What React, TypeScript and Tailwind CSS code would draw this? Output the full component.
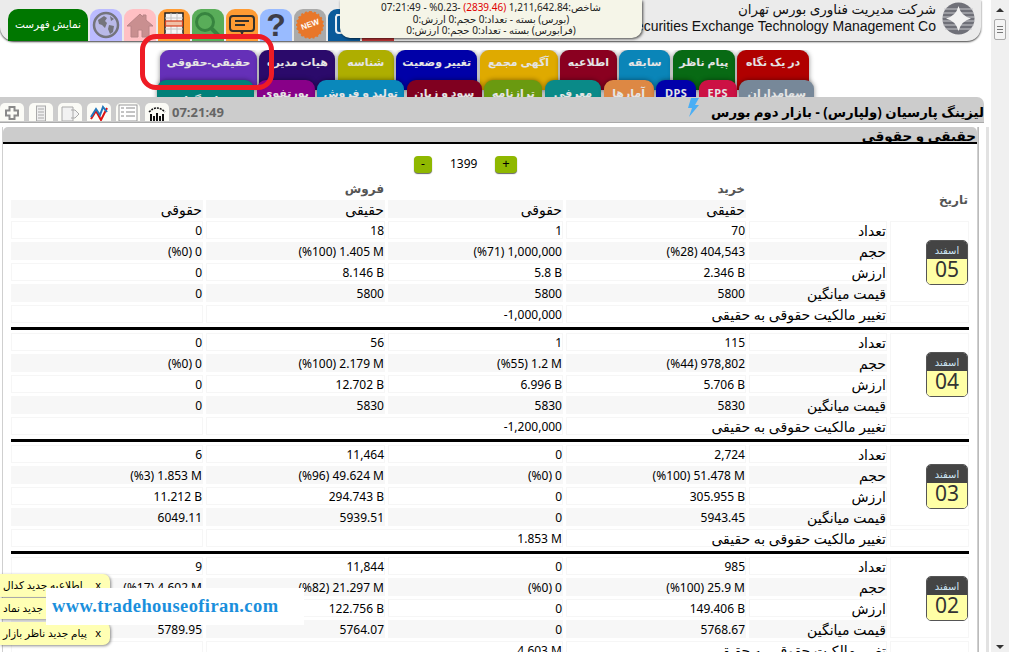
import { FC, ReactNode } from "react";

interface TabItem {
  label: string;
  width: string;
  color: string;
  pad?: string;
}

const topTabs: TabItem[] = [
  { label: "حقیقی-حقوقی", width: "w-[97px]", color: "bg-[#6530b8]" },
  { label: "هیات مدیره", width: "w-[76px]", color: "bg-[#2b0a6b]" },
  { label: "شناسه", width: "w-[56px]", color: "bg-[#aeae00]" },
  { label: "تغییر وضعیت", width: "w-[81px]", color: "bg-[#0000a8]" },
  { label: "آگهی مجمع", width: "w-[78px]", color: "bg-[#dfaa00]" },
  { label: "اطلاعیه", width: "w-[57px]", color: "bg-[#8a0020]" },
  { label: "سابقه", width: "w-[51px]", color: "bg-[#0a85b8]" },
  { label: "پیام ناظر", width: "w-[62px]", color: "bg-[#086a14]" },
  { label: "در یک نگاه", width: "w-[72px]", color: "bg-[#b00000]" },
];

const bottomTabs: TabItem[] = [
  { label: "سرمایه گذاری", width: "w-[97px]", color: "bg-[#008078]", pad: "pt-[12px]" },
  { label: "پورتفوی", width: "w-[58px]", color: "bg-[#880088]", pad: "pt-[5px]" },
  { label: "تولید و فروش", width: "w-[87px]", color: "bg-[#0a88bb]", pad: "pt-[5px]" },
  { label: "سود و زیان", width: "w-[75px]", color: "bg-[#800020]", pad: "pt-[5px]" },
  { label: "ترازنامه", width: "w-[58px]", color: "bg-[#6a9a10]", pad: "pt-[5px]" },
  { label: "معرفی", width: "w-[56px]", color: "bg-[#0a8a88]", pad: "pt-[5px]" },
  { label: "آمارها", width: "w-[50px]", color: "bg-[#dd8844]", pad: "pt-[5px]" },
  { label: "DPS", width: "w-[40px]", color: "bg-[#0000aa]", pad: "pt-[5px]" },
  { label: "EPS", width: "w-[38px]", color: "bg-[#cc1144]", pad: "pt-[5px]" },
  { label: "سهامداران", width: "w-[75px]", color: "bg-[#778899]", pad: "pt-[5px]" },
];

interface DayRow {
  month: string;
  day: string;
  count: string[];
  volume: string[];
  value: string[];
  average: string[];
  change: string;
}

const days: DayRow[] = [
  {
    month: "اسفند",
    day: "05",
    count: ["0", "18", "1", "70"],
    volume: ["(%0) 0", "(%100) 1.405 M", "(%71) 1,000,000", "(%28) 404,543"],
    value: ["0", "8.146 B", "5.8 B", "2.346 B"],
    average: ["0", "5800", "5800", "5800"],
    change: "-1,000,000",
  },
  {
    month: "اسفند",
    day: "04",
    count: ["0", "56", "1", "115"],
    volume: ["(%0) 0", "(%100) 2.179 M", "(%55) 1.2 M", "(%44) 978,802"],
    value: ["0", "12.702 B", "6.996 B", "5.706 B"],
    average: ["0", "5830", "5830", "5830"],
    change: "-1,200,000",
  },
  {
    month: "اسفند",
    day: "03",
    count: ["6", "11,464", "0", "2,724"],
    volume: ["(%3) 1.853 M", "(%96) 49.624 M", "(%0) 0", "(%100) 51.478 M"],
    value: ["11.212 B", "294.743 B", "0", "305.955 B"],
    average: ["6049.11", "5939.51", "0", "5943.45"],
    change: "1.853 M",
  },
  {
    month: "اسفند",
    day: "02",
    count: ["9", "11,844", "0", "985"],
    volume: ["(%17) 4.602 M", "(%82) 21.297 M", "(%0) 0", "(%100) 25.9 M"],
    value: ["0", "122.756 B", "0", "149.406 B"],
    average: ["5789.95", "5764.07", "0", "5768.67"],
    change: "4.603 M",
  },
];

const gridCols =
  "grid grid-cols-[192px_179px_175px_180px_138px_79px] gap-x-[3px]";

const Tab: FC<{ tab: TabItem }> = ({ tab }) => (
  <div
    className={`${tab.width} ${tab.color} ${tab.pad ?? "pt-[4px]"} h-[40px] shrink-0 rounded-t-[9px] text-center text-[11px] leading-[16px] font-bold tracking-[0.5px] whitespace-nowrap text-[#e4e4e4] shadow-[0_0_5px_rgba(0,0,0,0.45)]`}
  >
    {tab.label}
  </div>
);

const IconBox: FC<{ color: string; children: ReactNode }> = ({
  color,
  children,
}) => (
  <div
    className={`${color} flex h-[32px] w-[32px] shrink-0 items-center justify-center overflow-hidden rounded-t-[9px]`}
  >
    {children}
  </div>
);

const ToolButton: FC<{ children: ReactNode }> = ({ children }) => (
  <div className="flex h-[18px] w-[24px] shrink-0 items-start justify-center overflow-hidden rounded-t-[5px] bg-[#fbfbf6]">
    {children}
  </div>
);

// ar: persian text needs a bigger size than the digits to get the same look
const Cell: FC<{
  shade?: boolean;
  ar?: boolean;
  className?: string;
  children?: ReactNode;
}> = ({ shade, ar, className, children }) => (
  <div
    dir="ltr"
    className={`${shade ? "bg-[#f7f7f7]" : "shadow-[inset_0_0_0_1px_#f6f6f6]"} ${ar ? "text-[14px] leading-[19px]" : "text-[12px] leading-[20px]"} ${className ?? ""} h-[18px] pr-px text-right font-normal whitespace-nowrap text-black`}
  >
    {children}
  </div>
);

const DayBlock: FC<{ row: DayRow }> = ({ row }) => (
  <div>
    <div className={`${gridCols} gap-y-[3px]`}>
      {row.count.map((v, i) => (
        <Cell key={i}>{v}</Cell>
      ))}
      <Cell ar>تعداد</Cell>
      <div className="row-span-4 flex items-center justify-end pr-px shadow-[inset_0_0_0_1px_#f6f6f6]">
        <div className="mt-[1px] w-[42px] overflow-hidden rounded-[5px] border border-[#555] text-center">
          <div className="h-[18px] bg-[#444] text-[10px] leading-[18px] text-[#cfe6f5]">
            {row.month}
          </div>
          <div className="h-[25px] bg-[#ffffa6] text-[21px] leading-[20px] text-[#333]">
            {row.day}
          </div>
        </div>
      </div>
      {row.volume.map((v, i) => (
        <Cell key={i} shade>
          {v}
        </Cell>
      ))}
      <Cell shade ar>
        حجم
      </Cell>
      {row.value.map((v, i) => (
        <Cell key={i}>{v}</Cell>
      ))}
      <Cell ar>ارزش</Cell>
      {row.average.map((v, i) => (
        <Cell key={i} shade>
          {v}
        </Cell>
      ))}
      <Cell shade ar>
        قیمت میانگین
      </Cell>
      <Cell />
      <Cell className="col-span-2">{row.change}</Cell>
      <Cell ar className="col-span-2">
        تغییر مالکیت حقوقی به حقیقی
      </Cell>
      <Cell />
    </div>
    <div className="mt-[4px] mb-[3px] h-[3px] w-[958px] bg-black" />
  </div>
);

const Toast: FC<{ text: string; className: string }> = ({ text, className }) => (
  <div
    className={`${className} absolute left-0 flex w-[110px] items-center justify-between overflow-hidden rounded-r-[7px] bg-[#ffffb4] pr-[9px] text-[10.5px] whitespace-nowrap text-black shadow-[1px_1px_3px_rgba(0,0,0,0.45)]`}
  >
    <span dir="rtl" className="pl-[3px]">
      {text}
    </span>
    <span className="text-[11px]">x</span>
  </div>
);

const App: FC = () => {
  return (
    <div className="relative flex h-[652px] w-[1009px] overflow-hidden bg-white font-['Noto_Sans','DejaVu_Sans',sans-serif]">
      <div className="w-[991px] shrink-0">
        {/* header */}
        <div className="flex h-[41px] w-[981px] items-end rounded-b-[14px] bg-[#ebebeb] pl-[8px] shadow-[0_1px_2px_rgba(0,0,0,0.75)]">
          <div className="mr-[2px] flex h-[32px] w-[80px] shrink-0 items-center justify-center rounded-t-[10px] bg-[#007700] text-[10.5px] text-white">
            نمایش فهرست
          </div>
          <div className="flex gap-[2px]">
            <IconBox color="bg-[#bbbbff]">
              <svg width="28" height="28" viewBox="0 0 28 28">
                <circle cx="14" cy="14" r="12" fill="#b9b9e8" stroke="#74747c" strokeWidth="2.5" />
                <path d="M6 9l6-4 3 2-2 3 2 2-2 5-3-3-3-1zM17 14l5 1-1 6-3 2-2-5zM18 5l4 3-3 2z" fill="#74747c" />
              </svg>
            </IconBox>
            <IconBox color="bg-[#ffc0c4]">
              <svg width="30" height="28" viewBox="0 0 30 28">
                <path d="M15 3L2 15h4v11h7v-7h4v7h7V15h4L21 9V4h-3v2z" fill="#c98f90" stroke="#b88486" />
              </svg>
            </IconBox>
            <IconBox color="bg-[#ff9b33]">
              <svg width="20" height="28" viewBox="0 0 20 28">
                <rect x="1" y="2" width="18" height="26" fill="#f7f5f4" stroke="#222" strokeWidth="1.5" />
                <path d="M1 7h18M1 18h18M1 23h18M7 2v26M13 2v26" stroke="#c4c4c4" />
                <rect x="1.5" y="10" width="17" height="5" fill="#f0c0a8" stroke="#d8401f" strokeWidth="1.2" />
              </svg>
            </IconBox>
            <IconBox color="bg-[#59ad59]">
              <svg width="30" height="30" viewBox="0 0 30 30">
                <circle cx="12" cy="12" r="8.5" fill="none" stroke="#37843f" strokeWidth="3" />
                <path d="M18 18l9 9" stroke="#37843f" strokeWidth="4" />
              </svg>
            </IconBox>
            <IconBox color="bg-[#ff9b33]">
              <svg width="28" height="28" viewBox="0 0 28 28">
                <rect x="2" y="5" width="24" height="15" rx="3" fill="none" stroke="#33302c" strokeWidth="2" />
                <path d="M7 10h14M7 14h10" stroke="#33302c" strokeWidth="2" />
                <path d="M12 20l2 5 2-5z" fill="#33302c" />
              </svg>
            </IconBox>
            <IconBox color="bg-[#99bbff]">
              <span className="font-['Liberation_Sans',sans-serif] text-[32px] leading-[32px] font-bold text-[#3d3d48]">
                ?
              </span>
            </IconBox>
            <IconBox color="bg-[#aaaaaa]">
              <div className="relative flex h-[26px] w-[26px] items-center justify-center rounded-full bg-[#e8772a] outline-2 outline-offset-[-1px] outline-dotted outline-[#e8772a]">
                <span className="rotate-[-20deg] font-['Liberation_Sans',sans-serif] text-[8px] font-bold text-white">
                  NEW
                </span>
              </div>
            </IconBox>
            <IconBox color="bg-[#0a5a9a]">
              <svg width="28" height="28" viewBox="0 0 28 28">
                <path d="M7 4h12v18H9a3 3 0 0 1-3-3V6z" fill="none" stroke="#e8eef4" strokeWidth="2" />
              </svg>
            </IconBox>
            <IconBox color="bg-[#c23636]">
              <span />
            </IconBox>
          </div>
          <div className="mb-[6px] ml-auto flex flex-col items-end text-[#111]">
            <span dir="rtl" className="text-[13.5px] leading-[17px]">
              شرکت مدیریت فناوری بورس تهران
            </span>
            <span className="font-['Liberation_Sans',sans-serif] text-[14px] leading-[17px] whitespace-nowrap">
              Securities Exchange Technology Management Co
            </span>
          </div>
          <svg className="mr-[6px] mb-[6px] ml-[6px] shrink-0" width="33" height="33" viewBox="0 0 33 33">
            <circle cx="16.5" cy="16.5" r="16" fill="#6f7078" />
            <path d="M2 7h29M1 11h31M0 15h33M0 19h33M1 23h31M3 27h27" stroke="#c8c8cc" strokeWidth="1" />
            <path d="M16.5 4Q19 14 29 16.5Q19 19 16.5 29Q14 19 4 16.5Q14 14 16.5 4z" fill="#f2f2f2" />
          </svg>
        </div>

        {/* tabs */}
        <div className="mt-[9px] h-[47px] overflow-hidden">
          <div className="flex h-[30px] gap-[2.4px] pl-[160px]">
            {topTabs.map((t) => (
              <Tab key={t.label} tab={t} />
            ))}
          </div>
          <div className="relative flex h-[17px] gap-[2.6px] pl-[157px]">
            {bottomTabs.map((t) => (
              <Tab key={t.label} tab={t} />
            ))}
          </div>
        </div>

        {/* toolbar */}
        <div className="flex h-[26px] w-[984px] items-end rounded-tr-[7px] border-b border-[#aaa] bg-[#cccccc] pb-px">
          <div className="flex gap-[5px]">
            <ToolButton>
              <svg width="16" height="18" viewBox="0 0 16 18">
                <path d="M5.5 4h5v3.5H14v5h-3.500V16h-5v-3.500H2v-5h3.500z" fill="none" stroke="#8a8a8a" strokeWidth="2" />
              </svg>
            </ToolButton>
            <ToolButton>
              <svg width="12" height="18" viewBox="0 0 12 18">
                <rect x="1.500" y="3" width="9" height="15" fill="#eee" stroke="#aaa" />
                <path d="M3 6h6M3 9h6M3 12h6M3 15h6" stroke="#aaa" />
              </svg>
            </ToolButton>
            <ToolButton>
              <svg width="20" height="18" viewBox="0 0 20 18">
                <path d="M2 4h11v14H2zM11 7h4l4 4-4 4h-4" fill="#f2f2f2" stroke="#aaa" />
              </svg>
            </ToolButton>
            <ToolButton>
              <svg width="18" height="18" viewBox="0 0 18 18">
                <path d="M1 16L6 8l5 9 6-12" fill="none" stroke="#dd1111" strokeWidth="2" />
                <path d="M1 14L6 6l4 6 3-8 4 5" fill="none" stroke="#2277bb" strokeWidth="2" />
              </svg>
            </ToolButton>
            <ToolButton>
              <svg width="20" height="18" viewBox="0 0 20 18">
                <rect x="1" y="2" width="18" height="16" fill="#fff" stroke="#999" />
                <path d="M3 5h3M8 5h9M3 9h3M8 9h9M3 13h3M8 13h9" stroke="#888" />
              </svg>
            </ToolButton>
            <ToolButton>
              <svg width="20" height="18" viewBox="0 0 20 18">
                <path d="M2 9Q10 1 18 9" fill="none" stroke="#111" strokeWidth="1.500" strokeDasharray="2 1" />
                <path d="M4 18v-7M7 18v-5M10 18v-8M13 18v-5M16 18v-7" stroke="#111" strokeWidth="2" />
              </svg>
            </ToolButton>
          </div>
          <span className="ml-[3px] text-[13px] leading-[18px] font-bold text-[#666]">
            07:21:49
          </span>
          <svg className="mb-[4px] ml-auto shrink-0" width="12" height="19" viewBox="0 0 12 19">
            <path d="M4 0h8L8 7h4L2 19l3-9H1z" fill="#4aaef5" />
          </svg>
          <span dir="rtl" className="ml-[12px] text-[13.3px] leading-[18px] font-bold whitespace-nowrap text-black">
            لیزینگ پارسیان (ولپارس) - بازار دوم بورس
          </span>
        </div>

        {/* panel */}
        <div className="mt-[4px] ml-[2px] w-[976px] border-x border-[#cfcfcf] shadow-[1px_0_0_#bbb]">
          <div className="flex h-[17px] items-start justify-end rounded-t-[5px] border-b-2 border-black bg-[#cccccc] pr-[1px] text-[13.5px] leading-[19px] font-bold text-black">
            <span dir="rtl">حقیقی و حقوقی</span>
          </div>
          <div className="mt-[11px] flex h-[18px] items-center pl-[411px]">
            <div className="h-[17px] w-[18px] rounded-[4px] bg-[#8fb800] text-center text-[12px] leading-[15px] shadow-[0_1px_1px_#666]">
              -
            </div>
            <span className="mx-[18px] w-[27px] text-[12px]">1399</span>
            <div className="h-[17px] w-[22px] rounded-[4px] bg-[#8fb800] text-center text-[13px] leading-[15px] shadow-[0_1px_1px_#666]">
              +
            </div>
          </div>
          <div className="pl-[8px]">
            <div className={`${gridCols} mt-[8px] mb-[3px] gap-y-[4px] text-right text-[12px] font-bold text-[#555]`}>
              <span />
              <span className="h-[15px] pr-px leading-[15px]">فروش</span>
              <span />
              <span className="h-[15px] pr-px leading-[15px]">خرید</span>
              <span />
              <span className="row-span-2 self-center pr-px leading-[36px]">تاریخ</span>
              <Cell shade ar>
                حقوقی
              </Cell>
              <Cell shade ar>
                حقیقی
              </Cell>
              <Cell shade ar>
                حقوقی
              </Cell>
              <Cell shade ar>
                حقیقی
              </Cell>
              <span />
            </div>
            {days.map((d) => (
              <DayBlock key={d.day} row={d} />
            ))}
          </div>
        </div>
      </div>

      {/* scrollbar */}
      <div className="flex h-full w-[18px] shrink-0 flex-col items-center bg-[#f0f0f0]">
        <div className="mt-[8px] h-0 w-0 border-x-[4px] border-b-[4px] border-x-transparent border-b-[#333]" />
        <div className="mt-[7px] flex h-[21px] w-[12px] flex-col items-center justify-center gap-[2px] rounded-[2px] border border-[#aaa] bg-[#f4f4f4]">
          <div className="h-px w-[6px] bg-[#777]" />
          <div className="h-px w-[6px] bg-[#777]" />
          <div className="h-px w-[6px] bg-[#777]" />
        </div>
        <div className="mt-auto mb-[3px] h-0 w-0 border-x-[4px] border-t-[4px] border-x-transparent border-t-[#333]" />
      </div>

      {/* right gutter line beside the panel */}
      <div className="absolute top-[127px] bottom-0 left-[986px] w-[3px] bg-[#e2e2e2]" />

      {/* market ticker popup */}
      <div
        dir="rtl"
        className="absolute top-0 left-[340px] h-[38px] w-[302px] rounded-b-[10px] bg-[#f5f5e8] pt-[2px] text-center text-[10px] leading-[11.500px] text-[#222] shadow-[1px_1px_3px_rgba(0,0,0,0.7)]"
      >
        <div>
          شاخص:<bdi>1,211,642.84</bdi> <span className="text-[#e00000]">(2839.46)</span>{" "}
          <bdi>%0.23-</bdi> - <bdi>07:21:49</bdi>
        </div>
        <div>(بورس) بسته - تعداد:0 حجم:0 ارزش:0</div>
        <div>(فرابورس) بسته - تعداد:0 حجم:0 ارزش:0</div>
      </div>

      {/* red marker */}
      <div className="absolute top-[34px] left-[140px] h-[56px] w-[134px] rounded-[16px] border-[5px] border-[#ee1c25]" />

      {/* notifications */}
      <Toast text="اطلاعیه جدید کدال" className="top-[574px] h-[23px]" />
      <Toast text="اطلاعیه جدید نماد" className="top-[598px] h-[21px]" />
      <Toast text="پیام جدید ناظر بازار" className="top-[622px] h-[23px]" />

      {/* watermark */}
      <div className="absolute top-[588px] left-[46px] flex h-[37px] w-[258px] items-center bg-white pl-[6px] font-['Liberation_Serif',serif] text-[18.5px] font-bold tracking-[0.4px] text-[#1a8fdc]">
        www.tradehouseofiran.com
      </div>
    </div>
  );
};

export default App;
